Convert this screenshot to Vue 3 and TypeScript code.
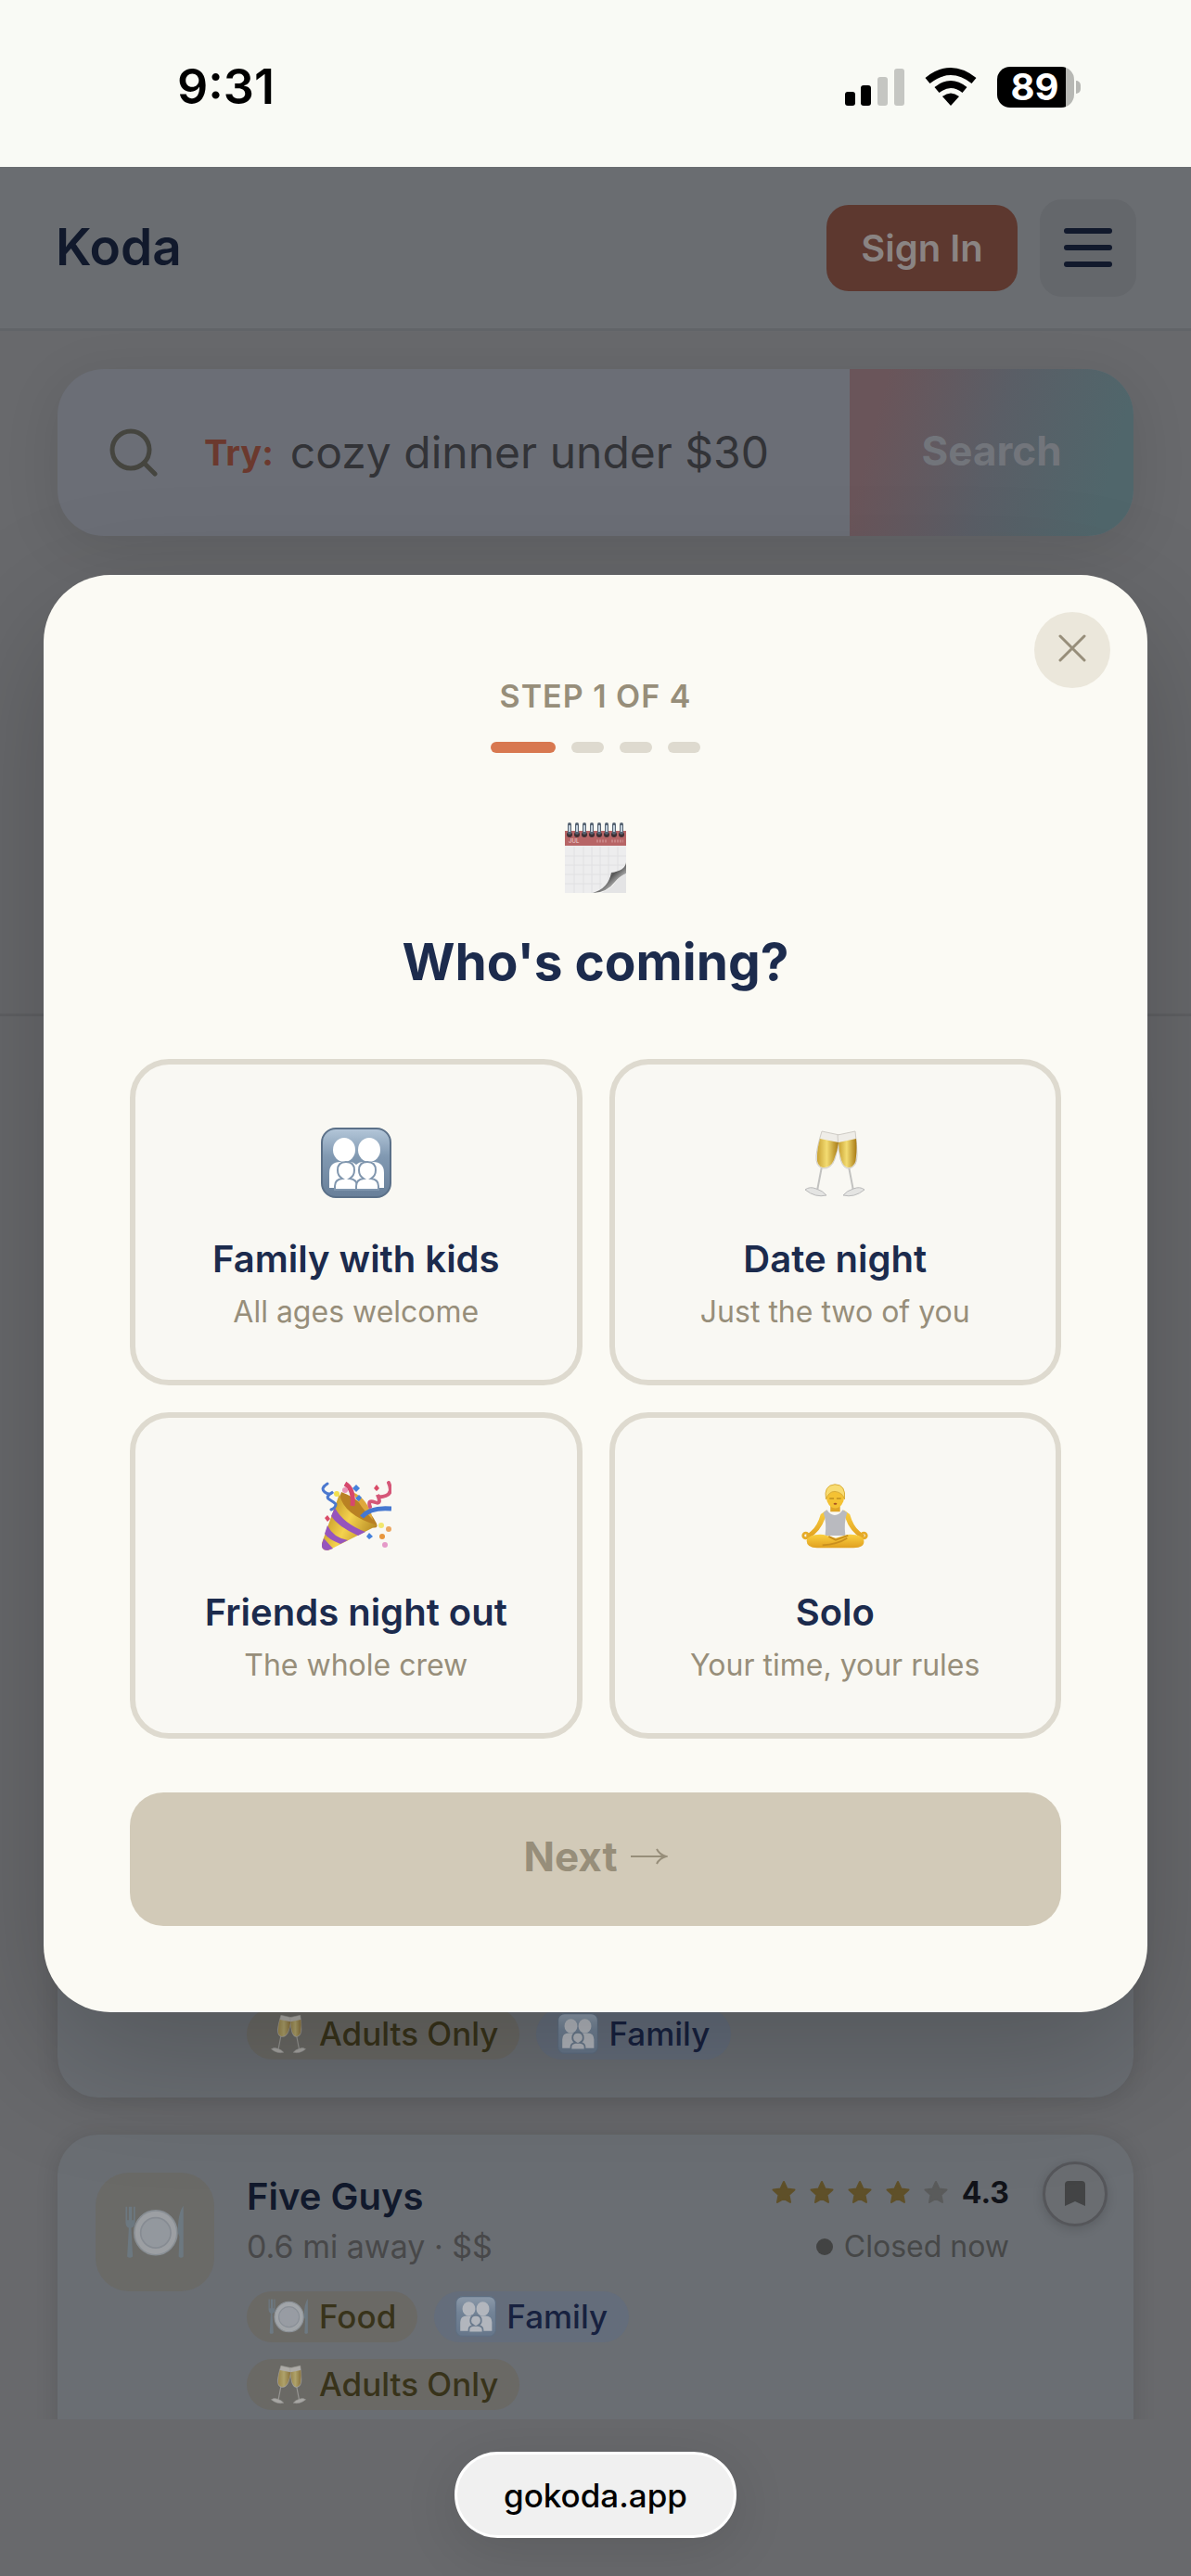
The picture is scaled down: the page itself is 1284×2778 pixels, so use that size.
<script setup lang="ts">
import { ref } from 'vue'

interface Option {
  id: string
  icon: string
  title: string
  note: string
}

interface Chip {
  icon: string
  label: string
  tone: 'gold' | 'blue'
}

const options: Option[] = [
  { id: 'family', icon: 'family-four', title: 'Family with kids', note: 'All ages welcome' },
  { id: 'date', icon: 'glasses', title: 'Date night', note: 'Just the two of you' },
  { id: 'friends', icon: 'party', title: 'Friends night out', note: 'The whole crew' },
  { id: 'solo', icon: 'lotus', title: 'Solo', note: 'Your time, your rules' },
]

const previousChips: Chip[] = [
  { icon: 'glasses', label: 'Adults Only', tone: 'gold' },
  { icon: 'family-three', label: 'Family', tone: 'blue' },
]

const placeChips: Chip[] = [
  { icon: 'plate', label: 'Food', tone: 'gold' },
  { icon: 'family-three', label: 'Family', tone: 'blue' },
  { icon: 'glasses', label: 'Adults Only', tone: 'gold' },
]

const steps = 4
const step = ref(1)
const query = ref('cozy dinner under $30')
const coils = [5, 13, 21, 29, 37, 45, 53, 61]
</script>

<template>
  <div class="app">
    <svg class="sprite" aria-hidden="true">
      <defs>
        <linearGradient id="tile" x1="0" y1="0" x2="0" y2="1">
          <stop offset="0" stop-color="#b4c7d9" />
          <stop offset="0.4" stop-color="#8199b2" />
          <stop offset="1" stop-color="#687f99" />
        </linearGradient>
        <linearGradient id="wine" x1="0" y1="0" x2="1" y2="0">
          <stop offset="0" stop-color="#c9a233" />
          <stop offset="0.45" stop-color="#f3dc72" />
          <stop offset="1" stop-color="#a87a14" />
        </linearGradient>
        <linearGradient id="cone" x1="0" y1="0.3" x2="1" y2="0.8">
          <stop offset="0" stop-color="#b98a1e" />
          <stop offset="0.45" stop-color="#f4d24e" />
          <stop offset="1" stop-color="#a97a1a" />
        </linearGradient>
        <linearGradient id="curl" x1="0" y1="0" x2="1" y2="1">
          <stop offset="0.2" stop-color="#ffffff" />
          <stop offset="0.5" stop-color="#555555" />
          <stop offset="0.75" stop-color="#c9c9c9" />
        </linearGradient>
        <linearGradient id="skin" x1="0" y1="0" x2="0" y2="1">
          <stop offset="0" stop-color="#fbd040" />
          <stop offset="1" stop-color="#e0a020" />
        </linearGradient>
      </defs>

      <symbol id="family-four" viewBox="0 0 76 76">
        <rect x="1" y="1" width="74" height="74" rx="15" fill="url(#tile)" stroke="#5b7088" stroke-width="2" />
        <g fill="#fff">
          <ellipse cx="25" cy="24" rx="12" ry="13" />
          <ellipse cx="52" cy="24" rx="12" ry="13" />
          <path d="M9 65V49q0-12 12-12h10q4 0 7 3 3-3 7-3h11q12 0 12 12v16Z" />
        </g>
        <g fill="#fff" stroke="#8096ae" stroke-width="2">
          <path d="M15 67v-4q0-7 8-8-5-3-5-9 0-9 9-9t9 9q0 6-5 9 8 1 8 8v4Z" />
          <path d="M38 67v-4q0-7 8-8-5-3-5-9 0-9 9-9t9 9q0 6-5 9 8 1 8 8v4Z" />
        </g>
      </symbol>

      <symbol id="family-three" viewBox="0 0 76 76">
        <rect x="1" y="1" width="74" height="74" rx="12" fill="url(#tile)" stroke="#5b7088" stroke-width="2" />
        <g fill="#fff">
          <ellipse cx="25" cy="24" rx="12" ry="13" />
          <ellipse cx="51" cy="24" rx="12" ry="13" />
          <path d="M9 65V49q0-12 12-12h10q4 0 7 3 3-3 7-3h11q12 0 12 12v16Z" />
        </g>
        <path d="M25 68v-5q0-7 9-8-6-3-6-9 0-10 10-10t10 10q0 6-6 9 9 1 9 8v5Z" fill="#fff" stroke="#7188a0" stroke-width="3" />
      </symbol>

      <symbol id="glasses" viewBox="0 0 76 76">
        <path d="m24 42-5 26M53 42l5 26" fill="none" stroke="#c2c2c0" stroke-width="2" />
        <path d="M6 67q5-4 12-1 7 2 11 7-12 3-23-6Z" fill="#e4e4e2" stroke="#bababa" />
        <path d="M70 67q-5-4-12-1-7 2-11 7 12 3 23-6Z" fill="#e4e4e2" stroke="#bababa" />
        <path d="m24 4 19 4q0 12-5 26-4 11-13 10-8-2-7-14 1-10 6-26Z" fill="#efede8" stroke="#cfccc6" />
        <path d="m60 4-19 4q0 12 3 26 3 11 10 10 8-2 8-14 0-10-2-26Z" fill="#efede8" stroke="#cfccc6" />
        <path d="m22 12 20 4q-1 9-5 19-4 9-12 8-7-2-6-12 0-8 3-19Z" fill="url(#wine)" />
        <path d="m61 12-19 4q0 9 3 19 3 9 9 8 7-2 7-12 1-8 0-19Z" fill="url(#wine)" />
      </symbol>

      <symbol id="party" viewBox="0 0 76 76">
        <path d="M22 12Q48 22 60 46q2 6-5 4Q28 40 20 18Z" fill="#b98123" />
        <path d="M34 12q9 17 22 30-5-23-22-30Z" fill="#dfa83c" />
        <path d="M20 14q4 23 41 34L8 75q-8 1-7-8Z" fill="url(#cone)" />
        <path d="m15 29q9 17 33 26l-8 4Q18 49 11 38Zm-8 19q6 13 22 16l-8 4Q8 63 4 57ZM3 62l10 11-6 2q-7 0-6-7Z" fill="#9655bd" />
        <path d="M26 3q10 6 8 24" fill="none" stroke="#d6486c" stroke-width="5" />
        <path d="M44 39q9-11 32-9" fill="none" stroke="#4577d0" stroke-width="5" />
        <path d="M7 3Q-1 8 4 12t9 0q-9 5-4 8t7 5q0 4-5 6" fill="none" stroke="#4b78cf" stroke-width="3" stroke-linecap="round" />
        <path d="M73 2q5 11-3 14t-9-1q5 11-3 8-8-3-5 5" fill="none" stroke="#d55778" stroke-width="4" stroke-linecap="round" />
        <g>
          <circle cx="17" cy="14" r="3" fill="#f2e04f" />
          <circle cx="26" cy="10" r="3" fill="#e995b7" />
          <path d="m38 4 4 4-4 4-4-4Zm3 11 3 3-3 4-4-3Zm11 41 4 4-4 3-3-3Z" fill="#4681db" />
          <path d="m60 4 3 4-3 3-3-3ZM7 37l3 4-3 3-3-4Z" fill="#d94b67" />
          <circle cx="65" cy="48" r="3" fill="#f2e76d" />
          <circle cx="73" cy="52" r="3" fill="#eba660" />
          <circle cx="66" cy="60" r="3" fill="#e8963d" />
          <circle cx="69" cy="69" r="3" fill="#e59ac8" />
        </g>
      </symbol>

      <symbol id="lotus" viewBox="-2 -2 80 80">
        <path d="M33 25h11v8h-11Z" fill="#dfa526" />
        <path d="m29 31-7 5q-4 14-11 19l-6 5 4 3q13-8 18-23Zm19 0 7 5q4 14 11 19l6 5-4 3q-13-8-18-23Z" fill="url(#skin)" />
        <circle cx="5" cy="60" r="3" fill="none" stroke="#e6ab28" stroke-width="3" />
        <circle cx="71" cy="60" r="3" fill="none" stroke="#e6ab28" stroke-width="3" />
        <path d="M29 31q4 6 9 6t9-6l5 3q-4 11-2 26H27q2-15-2-26Z" fill="#b9babf" />
        <path d="M25 59q-17-1-19 7 0 8 12 8h41q13 0 12-8-2-8-19-7L39 63Z" fill="url(#skin)" />
        <path d="m31 61 8 4 14-5M24 71q17-1 28-8" fill="none" stroke="#c98f1e" stroke-width="2" />
        <ellipse cx="38.5" cy="17" rx="10" ry="12" fill="#f4c233" />
        <path d="M28 19q-3-16 10-17 13 0 11 17-2-8-11-9-7 0-10 9Z" fill="#f8dc72" stroke="#d8ab35" />
        <path d="M32 18h5m3 0h5" stroke="#9c7016" />
        <ellipse cx="38.5" cy="24" rx="2" ry="1" fill="#a95222" />
      </symbol>

      <symbol id="plate" viewBox="0 0 76 68">
        <ellipse cx="39" cy="35" rx="27" ry="28" fill="#d9e1ed" stroke="#aebbcb" stroke-width="2" />
        <circle cx="39" cy="35" r="19" fill="#c6d0e2" stroke="#a9b5c8" stroke-width="2" />
        <path d="M1 2v20q0 5 4 7L3 65q3 3 7 0L8 29q5-2 5-7V2h-2v17H9V2H5v17H3V2Z" fill="#7089a0" />
        <path d="M74 1q-7 9-7 34l2 5-1 25q3 3 6 0Z" fill="#7089a0" />
      </symbol>

      <symbol id="star" viewBox="0 0 26 26">
        <path d="m13 2 3.500 7.500 8 1-6 5.500 1.500 8-7-4-7 4 1.500-8-6-5.500 8-1Z" fill="currentColor" stroke="currentColor" stroke-width="2" stroke-linejoin="round" />
      </symbol>
    </svg>

    <div class="status">
      <span class="clock">9:31</span>
      <div class="indicators">
        <svg width="64" height="44" viewBox="0 0 64 44" aria-label="Signal">
          <rect x="0" y="27" width="11" height="15" rx="3" />
          <rect x="17" y="20" width="11" height="22" rx="3" />
          <g fill="#c5c6c2">
            <rect x="35" y="11" width="11" height="31" rx="3" />
            <rect x="53" y="2" width="11" height="40" rx="3" />
          </g>
        </svg>
        <svg width="56" height="44" viewBox="0 0 56 44" aria-label="Wi-Fi">
          <path d="M28 42 19 32q9-7 18 0Z" />
          <path d="M13 25q15-12 30 0" fill="none" stroke="#000" stroke-width="8" />
          <path d="M3 15q25-20 50 0" fill="none" stroke="#000" stroke-width="8" />
        </svg>
        <div class="battery"><span>89</span></div>
      </div>
    </div>

    <div class="page">
      <header class="topbar">
        <a class="brand" href="#">Koda</a>
        <div class="actions">
          <button class="signin" type="button">Sign In</button>
          <button class="menu" type="button" aria-label="Menu"><i /><i /><i /></button>
        </div>
      </header>

      <section class="hero">
        <form class="search" @submit.prevent>
          <svg class="lens" width="52" height="52" viewBox="0 0 52 52" aria-hidden="true">
            <circle cx="23" cy="23" r="20" fill="none" stroke="currentColor" stroke-width="5" />
            <path d="m38 38 11 11" stroke="currentColor" stroke-width="5" stroke-linecap="round" />
          </svg>
          <label for="query">Try:</label>
          <input id="query" v-model="query" type="text" />
          <button type="submit">Search</button>
        </form>
      </section>

      <main class="results">
        <article class="place previous">
          <div class="chips">
            <span v-for="chip in previousChips" :key="chip.label" class="chip" :class="chip.tone">
              <svg aria-hidden="true"><use :href="'#' + chip.icon" /></svg>{{ chip.label }}
            </span>
          </div>
        </article>

        <article class="place">
          <div class="thumb">
            <svg aria-hidden="true"><use href="#plate" /></svg>
          </div>
          <div class="info">
            <div class="summary">
              <div class="naming">
                <h2>Five Guys</h2>
                <p>0.6 mi away · $$</p>
              </div>
              <div class="rating">
                <div class="stars">
                  <svg v-for="n in 5" :key="n" :class="{ off: n > 4 }" aria-hidden="true"><use href="#star" /></svg>
                  <strong>4.3</strong>
                </div>
                <p><i />Closed now</p>
              </div>
            </div>
            <div class="chips">
              <span v-for="chip in placeChips" :key="chip.label" class="chip" :class="chip.tone">
                <svg aria-hidden="true"><use :href="'#' + chip.icon" /></svg>{{ chip.label }}
              </span>
            </div>
          </div>
          <button class="save" type="button" aria-label="Save">
            <svg width="22" height="28" viewBox="0 0 22 28"><path d="M0 27V4q0-4 4-4h14q4 0 4 4v23l-11-5Z" fill="currentColor" /></svg>
          </button>
        </article>
      </main>

      <div class="overlay">
        <div class="modal" role="dialog" aria-modal="true" aria-labelledby="question">
          <button class="close" type="button" aria-label="Close">
            <svg width="30" height="30" viewBox="0 0 30 30"><path d="m2 2 26 26M28 2 2 28" stroke="currentColor" stroke-width="3" stroke-linecap="round" /></svg>
          </button>
          <p class="count">STEP {{ step }} OF {{ steps }}</p>
          <div class="dots"><i v-for="n in steps" :key="n" :class="{ on: n === step }" /></div>
          <svg class="calendar" viewBox="0 0 66 76" aria-hidden="true">
            <rect y="9" width="66" height="67" fill="#ededee" />
            <path d="M10 26v50M20 26v50M29 26v50M38 26v50M47 26v50M57 26v30M0 36h66M0 46h66M0 56h50M0 66h40" stroke="#e0e0e2" />
            <rect y="9" width="66" height="16" fill="#b76566" />
            <path d="M34 20h12m4 0h13" stroke="#c98586" stroke-width="3" stroke-dasharray="2 1" />
            <text x="4" y="22" font-size="6" fill="#f1dada">JUL</text>
            <g v-for="x in coils" :key="x">
              <circle :cx="x" cy="13" r="3" fill="#3d3034" />
              <path :d="`M${x} 2v9`" stroke="#566372" stroke-width="4" stroke-linecap="round" />
              <path :d="`M${x} 3v7`" stroke="#c3d0dc" stroke-width="2" />
            </g>
            <path d="M66 43q-1 9-15 11-3 17-20 22h35Z" fill="#fafaf7" />
            <path d="M66 43q-1 9-16 11-3 17-20 22 15 0 24-12 5-6 12-9Z" fill="url(#curl)" />
            <path d="M66 55q-8 4-12 10t-15 11h27Z" fill="#e4e4e5" />
          </svg>
          <h1 id="question">Who's coming?</h1>
          <div class="options">
            <button v-for="option in options" :key="option.id" class="option" type="button">
              <svg aria-hidden="true"><use :href="'#' + option.icon" /></svg>
              <span class="title">{{ option.title }}</span>
              <span class="note">{{ option.note }}</span>
            </button>
          </div>
          <button class="next" type="button" disabled>
            Next
            <svg width="40" height="20" viewBox="0 0 40 20" aria-hidden="true"><path d="M0 10h38M28 2q3 6 10 8-7 2-10 8" fill="none" stroke="currentColor" stroke-width="2" /></svg>
          </button>
        </div>
      </div>
    </div>

    <footer class="browser">
      <button type="button">gokoda.app</button>
    </footer>
  </div>
</template>

<style>
body {
  background: #68696c;
}
</style>

<style scoped>
* {
  box-sizing: border-box;
}

.app {
  display: flex;
  flex-direction: column;
  height: 100vh;
  font-family: Inter, "Liberation Sans", sans-serif;
}

.sprite {
  position: absolute;
  width: 0;
  height: 0;
}

button,
input {
  border: 0;
  padding: 0;
  font-family: inherit;
}

h1,
h2,
p {
  margin: 0;
}

.status {
  flex: none;
  display: flex;
  align-items: center;
  justify-content: space-between;
  height: 180px;
  padding: 8px 126px 0 191px;
  background: #f9faf5;
}

.clock {
  font-size: 52px;
  line-height: 60px;
  font-weight: 600;
}

.indicators {
  display: flex;
  align-items: center;
  gap: 22px;
}

.battery {
  position: relative;
  width: 83px;
  height: 44px;
  border-radius: 14px;
  background: linear-gradient(90deg, #000 74px, #b7b8b4 74px);
}

.battery span {
  display: block;
  padding-right: 2px;
  color: #fff;
  font-size: 40px;
  line-height: 44px;
  font-weight: 700;
  text-align: center;
}

.battery::after {
  content: "";
  position: absolute;
  top: 15px;
  right: -7px;
  width: 5px;
  height: 14px;
  border-radius: 0 5px 5px 0;
  background: #b7b8b4;
}

.page {
  position: relative;
  flex: 1;
  min-height: 0;
  display: flex;
  flex-direction: column;
  overflow: hidden;
  background: #68696c;
}

.topbar {
  flex: none;
  display: flex;
  align-items: center;
  justify-content: space-between;
  height: 177px;
  padding: 0 59px 0 60px;
  border-bottom: 3px solid #616468;
  background: #6a6d71;
}

.brand {
  padding-bottom: 2px;
  color: #11192c;
  font-size: 55px;
  line-height: 64px;
  font-weight: 600;
  text-decoration: none;
}

.actions {
  display: flex;
  align-items: center;
  gap: 24px;
}

.signin {
  width: 206px;
  height: 93px;
  border-radius: 24px;
  background: #5d382f;
  color: #8a8483;
  font-size: 40px;
  font-weight: 600;
}

.menu {
  display: flex;
  flex-direction: column;
  align-items: center;
  justify-content: center;
  gap: 12px;
  width: 104px;
  height: 105px;
  border-radius: 24px;
  background: #64676b;
}

.menu i {
  width: 52px;
  height: 6px;
  border-radius: 3px;
  background: #11192c;
}

.hero {
  flex: none;
  height: 739px;
  padding: 41px 62px 0;
  border-bottom: 3px solid #606164;
}

.search {
  display: flex;
  align-items: center;
  height: 180px;
  border-radius: 50px;
  overflow: hidden;
  background: #6b6e76;
  box-shadow: 0 12px 60px rgba(0, 0, 0, 0.1);
}

.lens {
  flex: none;
  margin: 0 50px 0 56px;
  color: #45453f;
}

.search label {
  color: #6b392e;
  font-size: 38px;
  line-height: 48px;
  font-weight: 700;
}

.search input {
  flex: 1;
  min-width: 0;
  margin-left: 18px;
  background: none;
  color: #323337;
  font-size: 48px;
  line-height: 60px;
}

.search button {
  flex: none;
  width: 306px;
  height: 100%;
  padding-bottom: 4px;
  background: linear-gradient(105deg, #6a555a 12%, #5a5e66 50%, #50666b 88%);
  color: #72757b;
  font-size: 44px;
  font-weight: 700;
}

.results {
  display: flex;
  flex-direction: column;
  gap: 40px;
  padding: 46px 62px 0;
}

.place {
  flex: none;
  display: flex;
  align-items: flex-start;
  min-height: 440px;
  padding: 41px 28px 41px 41px;
  border-radius: 44px;
  background: #6a6e73;
  box-shadow: 0 3px 24px rgba(0, 0, 0, 0.12);
}

.previous {
  align-items: flex-end;
  min-height: 1120px;
  padding-left: 204px;
}

.thumb {
  flex: none;
  display: grid;
  place-items: center;
  width: 128px;
  height: 128px;
  margin-right: 35px;
  border-radius: 36px;
  background: #6a6a67;
}

.thumb svg {
  width: 66px;
  height: 58px;
  opacity: 0.45;
}

.info {
  flex: 1;
}

.summary {
  display: flex;
  justify-content: space-between;
  height: 128px;
}

h2 {
  color: #11192c;
  font-size: 40px;
  line-height: 52px;
  font-weight: 600;
}

.naming p {
  margin-top: 4px;
  color: #484849;
  font-size: 34px;
  line-height: 48px;
}

.rating {
  padding-right: 36px;
}

.stars {
  display: flex;
  align-items: center;
  justify-content: flex-end;
  gap: 15px;
  height: 42px;
  color: #5f5029;
}

.stars svg {
  width: 26px;
  height: 26px;
}

.stars .off {
  color: #5a5b5b;
}

.stars strong {
  color: #111319;
  font-size: 32px;
  font-weight: 700;
}

.rating p {
  display: flex;
  align-items: center;
  justify-content: flex-end;
  gap: 12px;
  margin-top: 14px;
  color: #464747;
  font-size: 32px;
  line-height: 48px;
}

.rating i {
  width: 18px;
  height: 18px;
  border-radius: 50%;
  background: #424343;
}

.save {
  flex: none;
  display: grid;
  place-items: center;
  width: 70px;
  height: 70px;
  margin-top: -12px;
  border: 3px solid #55565a;
  border-radius: 50%;
  background: #6a6d71;
  color: #434445;
  box-shadow: 0 3px 12px rgba(0, 0, 0, 0.15);
}

.chips {
  display: flex;
  flex-wrap: wrap;
  gap: 18px;
  max-width: 560px;
}

.chip {
  display: flex;
  align-items: center;
  gap: 11px;
  height: 55px;
  padding: 0 23px 2px;
  border-radius: 28px;
  font-size: 35px;
  font-weight: 500;
}

.chip svg {
  width: 44px;
  height: 44px;
  opacity: 0.5;
}

.gold {
  background: #6a6965;
  color: #38331a;
}

.blue {
  background: #646d7b;
  color: #17213f;
}

.overlay {
  position: absolute;
  inset: 0;
  display: grid;
  align-items: center;
  padding: 0 47px;
}

.modal {
  position: relative;
  display: flex;
  flex-direction: column;
  align-items: center;
  padding: 111px 93px 93px;
  border-radius: 72px;
  background: #fbfaf4;
  box-shadow: 0 48px 144px rgba(0, 0, 0, 0.22);
}

.close {
  position: absolute;
  top: 40px;
  right: 40px;
  display: grid;
  place-items: center;
  width: 82px;
  height: 82px;
  padding-bottom: 4px;
  border-radius: 50%;
  background: #ebe7db;
  color: #978e7a;
}

.count {
  color: #978e7a;
  font-size: 34px;
  line-height: 40px;
  font-weight: 600;
  letter-spacing: 1px;
}

.dots {
  display: flex;
  gap: 17px;
  margin-top: 29px;
}

.dots i {
  width: 35px;
  height: 12px;
  border-radius: 6px;
  background: #dedacf;
}

.dots .on {
  width: 70px;
  background: #d87850;
}

.calendar {
  width: 66px;
  height: 76px;
  margin-top: 75px;
}

h1 {
  margin-top: 42px;
  color: #1c2b4d;
  font-size: 55px;
  line-height: 64px;
  font-weight: 700;
}

.options {
  align-self: stretch;
  display: grid;
  grid-template-columns: 1fr 1fr;
  gap: 29px;
  margin-top: 73px;
}

.option {
  display: flex;
  flex-direction: column;
  align-items: center;
  padding: 68px 0 53px;
  border: 6px solid #dedacf;
  border-radius: 42px;
  background: #f9f8f3;
}

.option svg {
  width: 76px;
  height: 76px;
}

.title {
  margin-top: 42px;
  color: #1c2b4d;
  font-size: 40px;
  line-height: 48px;
  font-weight: 600;
}

.note {
  margin-top: 13px;
  color: #978e7a;
  font-size: 32px;
  line-height: 40px;
}

.next {
  align-self: stretch;
  display: flex;
  align-items: center;
  justify-content: center;
  gap: 14px;
  height: 144px;
  padding-bottom: 6px;
  margin-top: 58px;
  border-radius: 36px;
  background: #d2cab8;
  color: #978e7a;
  font-size: 44px;
  font-weight: 700;
}

.browser {
  flex: none;
  display: flex;
  align-items: flex-start;
  justify-content: center;
  height: 169px;
  padding-top: 35px;
  background: #68696c;
}

.browser button {
  height: 93px;
  padding: 0 50px;
  border: 3px solid #fff;
  border-radius: 47px;
  background: #f0f0f0;
  color: #000;
  font-size: 35px;
  font-weight: 500;
  box-shadow: 0 12px 60px rgba(0, 0, 0, 0.12);
}
</style>
